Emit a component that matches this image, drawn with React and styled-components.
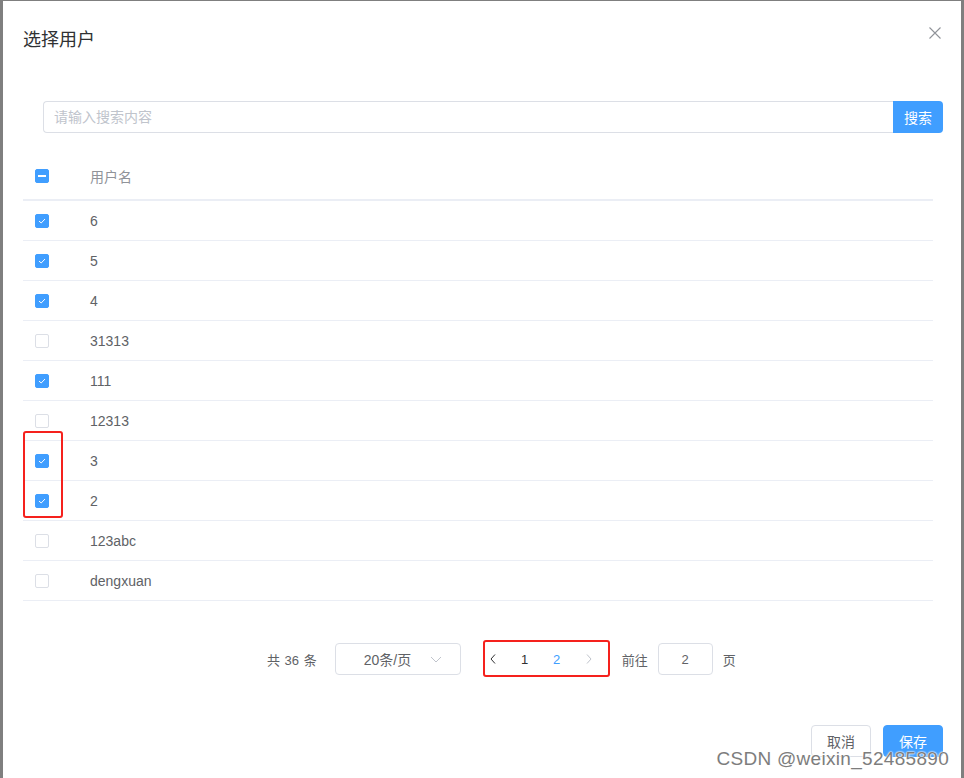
import React from 'react';
import styled, { createGlobalStyle } from 'styled-components';

// ------------------------------------ Global ------------------------------------
const GlobalStyle = createGlobalStyle`
  html, body {
    margin: 0;
    padding: 0;
    height: 778px;
    overflow: hidden;
    background: #7f7f7f;
  }
  body {
    font-family: "Liberation Sans", "Noto Sans CJK SC", sans-serif;
    color: #606266;
  }
  * { box-sizing: border-box; }
`;

// ------------------------------------ Styled Components ------------------------------------
const Dialog = styled.div`
  position: relative;
  width: 958px;
  height: 790px;
  margin: 1px 0 0 3px;
  background: #fff;
`;

const Header = styled.div`
  padding: 27px 20px 0 20px;
  position: relative;
`;

const Title = styled.div`
  font-size: 18px;
  line-height: 24px;
  color: #303133;
`;

const Close = styled.button`
  position: absolute;
  top: 24px;
  right: 18px;
  width: 16px;
  height: 16px;
  padding: 0;
  border: 0;
  background: none;
  display: flex;
  align-items: center;
  justify-content: center;
`;

const SearchRow = styled.div`
  display: flex;
  margin: 49px 18px 0 40px;
  height: 32px;
`;

const SearchInput = styled.input`
  flex: 1;
  height: 32px;
  border: 1px solid #dcdfe6;
  border-right: 0;
  border-radius: 4px 0 0 4px;
  padding: 0 10px;
  font-size: 14px;
  font-family: inherit;
  color: #606266;
  outline: none;
  &::placeholder { color: #c0c4cc; }
`;

const SearchButton = styled.button`
  width: 50px;
  height: 32px;
  border: 0;
  border-radius: 0 4px 4px 0;
  background: #409eff;
  color: #fff;
  font-size: 14px;
  font-family: inherit;
  padding: 0;
`;

const Table = styled.div`
  position: relative;
  margin: 19px 28px 0 20px;
`;

const HeadRow = styled.div`
  display: flex;
  align-items: center;
  height: 49px;
  border-bottom: 2px solid #ebeef5;
  color: #909399;
  font-size: 14px;
`;

const Row = styled.div`
  display: flex;
  align-items: center;
  height: 40px;
  border-bottom: 1px solid #ebeef5;
  font-size: 14px;
  color: #606266;
`;

const CheckCell = styled.div`
  width: 67px;
  padding-left: 12px;
  display: flex;
  align-items: center;
`;

const Box = styled.span`
  width: 14px;
  height: 14px;
  border-radius: 2px;
  border: 1px solid ${p => (p.$on ? '#409eff' : '#dcdfe6')};
  background: ${p => (p.$on ? '#409eff' : '#fff')};
  display: flex;
  align-items: center;
  justify-content: center;
`;

const Marker = styled.div`
  position: absolute;
  border: 2px solid #f5211d;
  border-radius: 3px;
  pointer-events: none;
`;

const Pagination = styled.div`
  display: flex;
  align-items: center;
  height: 32px;
  margin-top: 42px;
  padding-left: 264px;
  font-size: 13px;
  color: #606266;
`;

const Total = styled.span`
  margin-right: 18px;
  word-spacing: 1px;
`;

const SizeSelect = styled.div`
  width: 126px;
  height: 32px;
  border: 1px solid #dcdfe6;
  border-radius: 4px;
  display: flex;
  align-items: center;
  padding: 0 18px 0 28px;
  justify-content: space-between;
  margin-right: 16px;
  font-size: 14px;
`;

const Pager = styled.div`
  position: relative;
  display: flex;
  align-items: center;
`;

const PageItem = styled.span`
  width: 32px;
  height: 32px;
  display: flex;
  align-items: center;
  justify-content: center;
  color: ${p => (p.$active ? '#409eff' : '#303133')};
`;

const Jumper = styled.div`
  display: flex;
  align-items: center;
  margin-left: 17px;
  gap: 10px;
`;

const JumpInput = styled.div`
  width: 55px;
  height: 32px;
  border: 1px solid #dcdfe6;
  border-radius: 4px;
  display: flex;
  align-items: center;
  justify-content: center;
`;

const Footer = styled.div`
  display: flex;
  justify-content: flex-end;
  gap: 12px;
  margin: 50px 18px 0 0;
`;

const Button = styled.button`
  width: 60px;
  height: 32px;
  border-radius: 4px;
  font-size: 14px;
  font-family: inherit;
  padding: 0;
  border: 1px solid ${p => (p.$primary ? '#409eff' : '#dcdfe6')};
  background: ${p => (p.$primary ? '#409eff' : '#fff')};
  color: ${p => (p.$primary ? '#fff' : '#606266')};
`;

const Watermark = styled.div`
  position: absolute;
  right: 15px;
  bottom: 8px;
  font-family: "Liberation Sans", "Noto Sans CJK SC", sans-serif;
  font-size: 19px;
  line-height: 22px;
  letter-spacing: 0.3px;
  color: #7d7d7d;
  text-shadow: 0 0 2px #fff, 0 0 2px #fff, 0 0 1px #fff;
  pointer-events: none;
`;

// ------------------------------------ Data ------------------------------------
const users = [
  { name: '6', on: true },
  { name: '5', on: true },
  { name: '4', on: true },
  { name: '31313', on: false },
  { name: '111', on: true },
  { name: '12313', on: false },
  { name: '3', on: true },
  { name: '2', on: true },
  { name: '123abc', on: false },
  { name: 'dengxuan', on: false },
];

const Check = ({ on, half }) => (
  <Box $on={on || half}>
    {on && (
      <svg width="10" height="10" viewBox="0 0 10 10">
        <path d="M2 5 L4.2 7 L8 3" fill="none" stroke="#fff" strokeWidth="1" />
      </svg>
    )}
    {half && <span style={{ width: 8, height: 2, background: '#fff', display: 'block' }} />}
  </Box>
);

const Chevron = ({ dir, color }) => (
  <svg width="12" height="12" viewBox="0 0 12 12">
    <path
      d={dir === 'left' ? 'M8 1.5 L4 6 L8 10.5' : dir === 'right' ? 'M4 1.5 L8 6 L4 10.5' : 'M1 4 L6 9 L11 4'}
      fill="none"
      stroke={color}
      strokeWidth="1"
    />
  </svg>
);

const App = () => {
  return (
    <>
      <GlobalStyle />
      <Dialog>
        <Header>
          <Title>选择用户</Title>
          <Close>
            <svg width="12" height="12" viewBox="0 0 12 12">
              <path d="M0.5 0.5 L11.5 11.5 M11.5 0.5 L0.5 11.5" stroke="#909399" strokeWidth="1.1" />
            </svg>
          </Close>
        </Header>

        <SearchRow>
          <SearchInput placeholder="请输入搜索内容" />
          <SearchButton>搜索</SearchButton>
        </SearchRow>

        <Table>
          <HeadRow>
            <CheckCell>
              <Check half />
            </CheckCell>
            <span>用户名</span>
          </HeadRow>
          {users.map(u => (
            <Row key={u.name}>
              <CheckCell>
                <Check on={u.on} />
              </CheckCell>
              <span>{u.name}</span>
            </Row>
          ))}
          <Marker style={{ left: 0, top: 279, width: 40, height: 87 }} />
        </Table>

        <Pagination>
          <Total>共 36 条</Total>
          <SizeSelect>
            <span>20条/页</span>
            <Chevron dir="down" color="#c0c4cc" />
          </SizeSelect>
          <Pager>
            <PageItem>
              <Chevron dir="left" color="#303133" />
            </PageItem>
            <PageItem>1</PageItem>
            <PageItem $active>2</PageItem>
            <PageItem>
              <Chevron dir="right" color="#c0c4cc" />
            </PageItem>
            <Marker style={{ left: 6, right: -5, top: -3, bottom: -2 }} />
          </Pager>
          <Jumper>
            <span>前往</span>
            <JumpInput>2</JumpInput>
            <span>页</span>
          </Jumper>
        </Pagination>

        <Footer>
          <Button>取消</Button>
          <Button $primary>保存</Button>
        </Footer>
      </Dialog>
      <Watermark>CSDN @weixin_52485890</Watermark>
    </>
  );
};

export default App;
